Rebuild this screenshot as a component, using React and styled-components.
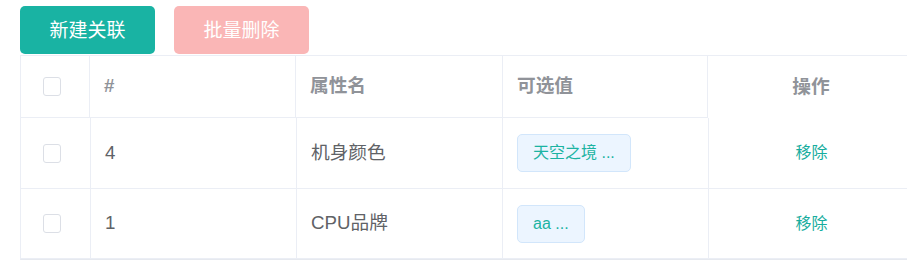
import React from "react";
import styled, { createGlobalStyle } from "styled-components";

const Global = createGlobalStyle`
  html, body { margin: 0; padding: 0; overflow: hidden; background: #fff; }
  body { font-family: "Liberation Sans", "Noto Sans CJK SC", sans-serif; }
  * { box-sizing: border-box; }
`;

const Page = styled.div`
  padding: 6px 0 0 20px;
  width: 914px;
`;

const Toolbar = styled.div`
  display: flex;
  gap: 19px;
  margin-bottom: 1px;
`;

const Button = styled.button`
  width: 135px;
  height: 48px;
  border: none;
  border-radius: 5px;
  color: #fff;
  font-family: "Liberation Sans", "Noto Sans CJK SC", sans-serif;
  font-size: 19px;
  line-height: 1;
  background: ${(p) => (p.$variant === "danger" ? "#fab6b6" : "#19b3a3")};
  cursor: ${(p) => (p.disabled ? "not-allowed" : "pointer")};
  padding: 0;
`;

const Table = styled.div`
  border-top: 1px solid #ebeef5;
  border-left: 1px solid #ebeef5;
  border-bottom: 1px solid #e6e9ef;
  width: 894px;
`;

const Row = styled.div`
  display: grid;
  grid-template-columns: ${(p) => p.$cols};
  height: ${(p) => p.$h}px;
`;

const Cell = styled.div`
  display: flex;
  align-items: center;
  justify-content: ${(p) => (p.$center ? "center" : "flex-start")};
  padding: ${(p) => (p.$check ? "0 0 0 22px" : p.$center ? "0" : "0 14px")};
  border-right: ${(p) => (p.$last ? "none" : "1px solid #ebeef5")};
  border-bottom: ${(p) => (p.$noBottom ? "none" : "1px solid #ebeef5")};
  font-size: 18.7px;
  line-height: 1;
  color: ${(p) => (p.$head ? "#909399" : "#606266")};
  font-weight: ${(p) => (p.$head ? 700 : 400)};
  white-space: nowrap;
`;

const Checkbox = styled.span`
  display: inline-block;
  width: 18px;
  height: 19px;
  border: 1px solid #dcdfe6;
  border-radius: 3px;
  background: #fff;
`;

const Tag = styled.span`
  display: inline-flex;
  align-items: center;
  height: 38px;
  padding: 0 15px;
  background: #ecf5ff;
  border: 1px solid #d2e6fb;
  border-radius: 5px;
  font-size: 16px;
  line-height: 1;
  color: #1bb3a2;
`;

const Link = styled.span`
  font-size: 16px;
  color: #17ad9e;
  cursor: pointer;
`;

const headCols = "69px 206px 207px 205px 206px";
const bodyCols = "70px 206px 206px 206px 205px";

const rows = [
  { id: 4, name: "机身颜色", value: "天空之境 ...", h: 71 },
  { id: 1, name: "CPU品牌", value: "aa ...", h: 70 },
];

export default function App() {
  return (
    <>
      <Global />
      <Page>
        <Toolbar>
          <Button>新建关联</Button>
          <Button $variant="danger" disabled>
            批量删除
          </Button>
        </Toolbar>
        <Table>
          <Row $cols={headCols} $h={62}>
            <Cell $head $check>
              <Checkbox />
            </Cell>
            <Cell $head>#</Cell>
            <Cell $head>属性名</Cell>
            <Cell $head>可选值</Cell>
            <Cell $head $center $last $noBottom>
              操作
            </Cell>
          </Row>
          {rows.map((r) => (
            <Row key={r.id} $cols={bodyCols} $h={r.h}>
              <Cell $check>
                <Checkbox />
              </Cell>
              <Cell>{r.id}</Cell>
              <Cell>{r.name}</Cell>
              <Cell>
                <Tag>{r.value}</Tag>
              </Cell>
              <Cell $center $last>
                <Link>移除</Link>
              </Cell>
            </Row>
          ))}
        </Table>
      </Page>
    </>
  );
}
